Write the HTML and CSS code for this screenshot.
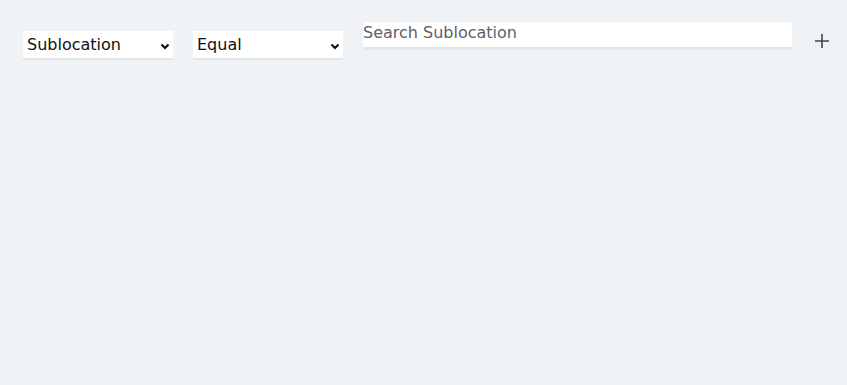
FILE: index.html
```html
<!DOCTYPE html>
<html lang="en">
<head>
    <meta charset="UTF-8">
    <meta name="viewport" content="width=device-width, initial-scale=1.0">
    <title>Sublocation filter</title>
    <link rel="stylesheet" href="styles.css">
</head>
<body>
    <div class="filter-row">
        <div class="select-wrap">
            <select class="field-select">
                <option>Sublocation</option>
                <option>Location</option>
            </select>
            <svg class="chevron" width="10" height="7" viewBox="0 0 10 7"><path d="M1.5 1.5 L5 5 L8.5 1.5" fill="none" stroke="#111" stroke-width="2.2"/></svg>
        </div>
        <div class="select-wrap">
            <select class="field-select">
                <option>Equal</option>
                <option>Not equal</option>
            </select>
            <svg class="chevron" width="10" height="7" viewBox="0 0 10 7"><path d="M1.5 1.5 L5 5 L8.5 1.5" fill="none" stroke="#111" stroke-width="2.2"/></svg>
        </div>
        <input class="search-input" type="text" placeholder="Search Sublocation">
        <button class="add-btn" type="button">
            <svg width="14" height="14" viewBox="0 0 14 14"><path d="M7 0 V14 M0 7 H14" stroke="#444" stroke-width="1.6"/></svg>
        </button>
    </div>
</body>
</html>
```

FILE: styles.css
```css
* {
    margin: 0;
    padding: 0;
    box-sizing: border-box;
}

body {
    font-family: 'DejaVu Sans', 'Open Sans', sans-serif;
    background: #f0f3f6;
    min-height: 100vh;
}

.filter-row {
    display: flex;
    align-items: flex-start;
    padding: 22px 0 0 23px;
}

.select-wrap {
    position: relative;
    width: 150px;
    margin-top: 9px;
    margin-right: 20px;
}

.field-select {
    appearance: none;
    -webkit-appearance: none;
    width: 100%;
    height: 29px;
    border: none;
    border-bottom: 2px solid #e4e5e7;
    border-radius: 0;
    background: #fff;
    font-family: inherit;
    font-size: 16px;
    color: #111;
    padding: 0 20px 0 4px;
    outline: none;
}

.chevron {
    position: absolute;
    right: 3px;
    top: 12px;
    pointer-events: none;
}

.search-input {
    width: 429px;
    height: 28px;
    border: none;
    border-bottom: 3px solid #e4e5e7;
    background: #fff;
    font-family: inherit;
    font-size: 16px;
    color: #333;
    padding: 0 0 5px 0;
    outline: none;
}

.search-input::placeholder {
    color: #5c5f66;
}

.add-btn {
    border: none;
    background: none;
    margin: 12px 0 0 23px;
    width: 14px;
    height: 14px;
    display: flex;
    cursor: pointer;
}
```
